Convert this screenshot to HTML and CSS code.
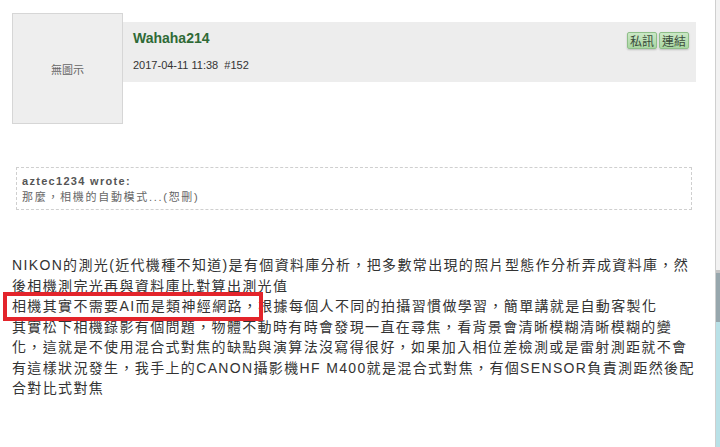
FILE: index.html
```html
<html>
  <head>
<link rel="stylesheet" href="styles.css">
  </head>
  <body>
    <div class="page">
      <div class="post">
        <div class="avatar">無圖示</div>
        <div class="post-head">
          <div class="author">
            <div class="name">Wahaha214</div>
            <div class="date">2017-04-11 11:38&nbsp; #152</div>
          </div>
          <div class="btns">
            <button class="btn">私訊</button>
            <button class="btn">連結</button>
          </div>
        </div>
      </div>
      <div class="quote">
        <div class="quote-who">aztec1234 wrote:</div>
        <div class="quote-text">那麼，相機的自動模式...(恕刪)</div>
      </div>
      <div class="content">
        NIKON的測光(近代機種不知道)是有個資料庫分析，把多數常出現的照片型態作分析弄成資料庫，然<br>
        後相機測完光再與資料庫比對算出測光值<br>
        相機其實不需要AI而是類神經網路，根據每個人不同的拍攝習慣做學習，簡單講就是自動客製化<br>
        其實松下相機錄影有個問題，物體不動時有時會發現一直在尋焦，看背景會清晰模糊清晰模糊的變<br>
        化，這就是不使用混合式對焦的缺點與演算法沒寫得很好，如果加入相位差檢測或是雷射測距就不會<br>
        有這樣狀況發生，我手上的CANON攝影機HF M400就是混合式對焦，有個SENSOR負責測距然後配<br>
        合對比式對焦
        <div class="mark"></div>
      </div>
    </div>
    <div class="side"></div>
  </body>
</html>
```

FILE: styles.css
```css
body{
  margin: 0;
  display: flex;
  min-height: 447px;
  background: #fff;
  font-family: "Liberation Sans", "Noto Sans CJK TC", sans-serif;
  color: #333;
}
.page{
  width: 716px;
  box-sizing: border-box;
  padding: 13px 19px 0 12px;
  border-right: 1px solid #cfcfcf;
}
.side{
  flex: 1;
  background: linear-gradient(to bottom, #f2f2f2 0, #f2f2f2 270px, #c4c4c4 270px, #c4c4c4 273px, #97a7ad 273px, #97a7ad 322px, #b9e1e7 322px);
}
.post{
  display: flex;
  align-items: flex-start;
}
.avatar{
  width: 111px;
  height: 111px;
  box-sizing: border-box;
  border: 1px solid #d6d6d6;
  background: #eee;
  display: flex;
  align-items: center;
  justify-content: center;
  font-size: 11px;
  color: #666;
}
.post-head{
  flex: 1;
  margin-top: 9px;
  height: 60px;
  box-sizing: border-box;
  padding: 8px 7px 0 10px;
  background: #ededed;
  display: flex;
  justify-content: space-between;
  align-items: flex-start;
}
.name{
  font-size: 14px;
  line-height: 16px;
  font-weight: 700;
  color: #2f6a36;
}
.date{
  margin-top: 12px;
  font-size: 11px;
  line-height: 14px;
  color: #333;
}
.btns{
  display: flex;
  gap: 2px;
  margin-top: 2px;
}
.btn{
  padding: 0 2px;
  height: 17px;
  font-family: "Noto Sans CJK TC", sans-serif;
  font-size: 12px;
  line-height: 15px;
  color: #3a4a3a;
  background: linear-gradient(#cbe8c6, #a8d6a1);
  border: 1px solid #8fbf89;
  border-radius: 2px;
  box-shadow: 0 1px 2px rgba(0, 0, 0, 0.2);
}
.quote{
  margin: 43px 4px 0;
  padding: 5px 6px 4px 5px;
  border: 1px dashed #cfcfcf;
  font-size: 11px;
  line-height: 16px;
  letter-spacing: 1.3px;
}
.quote-who{
  font-weight: 700;
  color: #555;
}
.quote-text{
  color: #666;
  letter-spacing: 1.7px;
}
.content{
  position: relative;
  margin-top: 45px;
  font-size: 14px;
  line-height: 20.5px;
  letter-spacing: 1.35px;
  white-space: nowrap;
  color: #333;
}
.mark{
  position: absolute;
  left: -9px;
  top: 37px;
  width: 260px;
  height: 29px;
  box-sizing: border-box;
  border: 4px solid #e3242b;
}
```
